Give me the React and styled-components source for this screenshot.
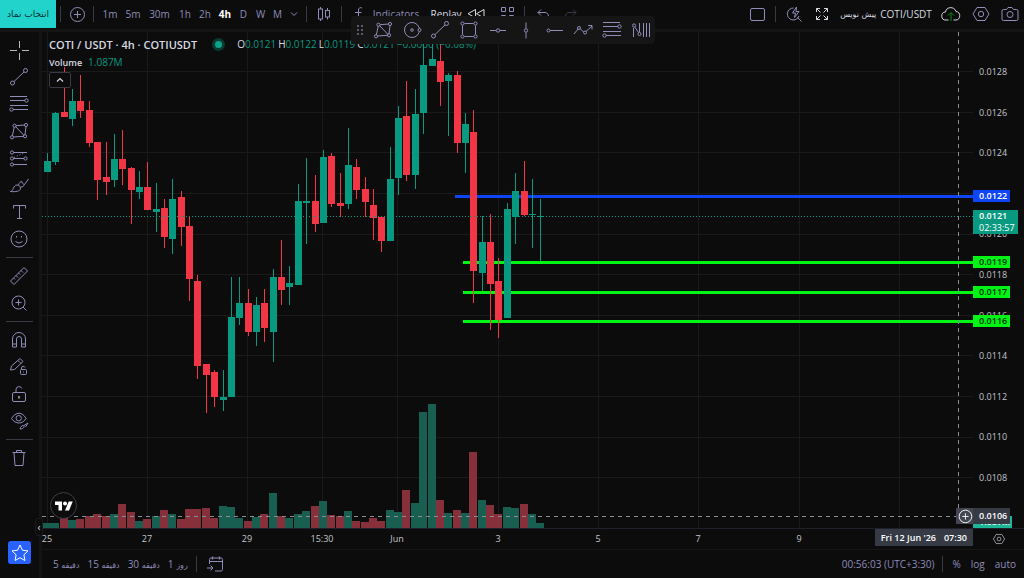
import React from 'react';
import styled, { createGlobalStyle } from 'styled-components';

const ink = '#8f8dba';
const up = '#089981';
const down = '#f23645';

// body top, body bottom, high, low, up (1) or down (0)
const candles = [
  [161, 172, 153, 172, 1], [113, 162, 112, 165, 1], [112, 117, 67, 117, 0], [101, 119, 89, 126, 1],
  [101, 111, 75, 118, 0], [110, 143, 101, 147, 0], [142, 180, 142, 200, 0], [177, 182, 142, 195, 0],
  [159, 180, 134, 187, 1], [159, 169, 130, 185, 0], [168, 190, 167, 224, 0], [187, 192, 171, 199, 1],
  [187, 210, 162, 210, 0], [209, 212, 183, 232, 1], [208, 237, 199, 248, 0], [199, 239, 179, 254, 1],
  [197, 227, 191, 246, 0], [226, 279, 216, 301, 0], [281, 366, 275, 379, 0], [364, 375, 364, 413, 0],
  [372, 397, 370, 407, 0], [397, 400, 370, 411, 1], [317, 397, 277, 397, 1], [303, 318, 277, 325, 1],
  [303, 332, 289, 336, 0], [305, 332, 297, 346, 1], [303, 328, 289, 342, 0], [277, 332, 269, 362, 1],
  [277, 290, 240, 305, 0], [283, 287, 266, 305, 1], [201, 285, 184, 285, 1], [201, 203, 158, 244, 1],
  [201, 224, 175, 232, 0], [157, 223, 150, 223, 1], [156, 204, 153, 207, 0], [203, 206, 173, 217, 0],
  [165, 204, 128, 209, 1], [167, 190, 159, 199, 0], [189, 202, 177, 217, 0], [205, 218, 189, 240, 0],
  [217, 241, 217, 252, 0], [179, 241, 147, 241, 1], [118, 178, 106, 195, 1], [116, 175, 81, 181, 0],
  [114, 175, 89, 189, 1], [65, 113, 40, 134, 1], [59, 66, 40, 66, 1], [61, 82, 42, 106, 0],
  [75, 81, 73, 136, 1], [75, 143, 71, 153, 0], [124, 143, 113, 173, 1], [132, 271, 110, 303, 0],
  [242, 273, 216, 291, 1], [242, 284, 214, 330, 0], [281, 320, 258, 338, 0], [209, 318, 203, 318, 1],
  [191, 217, 173, 244, 1], [191, 215, 161, 216, 0], [214, 215, 179, 248, 1], [216, 217, 199, 261, 1],
];

const volumes = [
  5, 5, 10, 8, 9, 12, 14, 12, 14, 24, 16, 7, 9, 12, 18, 14, 9, 19, 19, 20, 10, 22, 21, 10, 7, 11, 14, 35, 12,
  10, 14, 17, 22, 27, 13, 12, 17, 7, 6, 10, 7, 18, 16, 38, 25, 116, 124, 28, 15, 18, 15, 76, 28, 23, 14, 21,
  20, 24, 14, 5,
];

// the 0.0122 step is taken by the alert line's own tag
const prices = [
  '0.0128', '0.0126', '0.0124', '\u00a0', '0.0120', '0.0118', '0.0116', '0.0114', '0.0112', '0.0110', '0.0108',
];

const ticks = [
  [47, '25'], [147, '27'], [247, '29'], [322, '15:30'], [397, 'Jun'], [498, '3'], [598, '5'], [698, '7'],
  [799, '9'], [899, ''],
];

const levels = [
  [455, 196, '#0f45f5'], [463, 262, '#00f514'], [463, 292, '#00f514'], [463, 321, '#00f514'],
];

const LEFT = 42;
const TOP = 32;
const BASE = 496;

const candleX = (i) => Math.round(47 - LEFT + i * 8.36);
const gridY = (i) => Math.round(71 - TOP + i * 40.64) + 0.5;

const glyphs = {
  cross: <path d="M10.500 1v7M10.500 13v7M1 10.500h7M13 10.500h7" />,
  trend: <><circle cx="3.500" cy="16" r="2" /><circle cx="16.500" cy="3.500" r="2" /><path d="M5 14.500 15 5" /></>,
  fib: <><path d="M1 2.500h17M1 6.500h15M1 11.500h18M4 15.500h15" /><circle cx="17.500" cy="6.500" r="1.700" /><circle cx="2.500" cy="15.500" r="1.700" /></>,
  pattern: <><path d="M5.300 6 3.300 15M6.500 5.500 15 14.500M17 5.500l-1 8M7 4.700 15.500 4M4.500 16l10-.700" /><circle cx="5.500" cy="4.700" r="1.600" /><circle cx="17" cy="4" r="1.600" /><circle cx="16" cy="15.200" r="1.600" /><circle cx="3" cy="16.300" r="1.600" /></>,
  forecast: <><path d="M4.500 4.500H18M4.500 10.500H15M4.500 16.500H18" /><path d="m5 9.500 11-5" strokeDasharray="1 2" /><circle cx="3" cy="4.500" r="1.600" /><circle cx="3" cy="10.500" r="1.600" /><circle cx="3" cy="16.500" r="1.600" /><circle cx="16.500" cy="10.500" r="1.600" /></>,
  brush: <path d="M1.500 16.500c3 0 2.500-6.500 6.500-6.500 2 0 3.500 1.500 3.500 3.200 0 3.300-5 3.800-10 3.300zM9.500 10c.5-2 2-3.500 3.500-3.500M12 12c1.500 0 3-1 3.500-2.500M13 6.500c.2 1.700 1 2.700 2.500 3L19.500 4" />,
  text: <path d="M4.500 6.500V3.500h12v3M10.500 3.500v13M8 16.500h5" />,
  smile: <><circle cx="10" cy="10" r="8" /><path d="M6.500 12c1.500 2.500 5.500 2.500 7 0M7.500 7v1.500M12.500 7v1.500" /></>,
  ruler: <path d="M1.500 15 15 1.500 18.500 5 5 18.500zM4.500 12l1.500 1.500M7 9.500l2 2M9.500 7 11 8.500M12 4.500l2 2" />,
  zoom: <><circle cx="9.500" cy="9.500" r="6.500" /><path d="m14 14 3.500 3.500M6.500 9.500h6M9.500 6.500v6" /></>,
  magnet: <path d="M3.500 17V9a6.500 6.500 0 0 1 13 0v8h-4V9a2.500 2.500 0 0 0-5 0v8zM3.500 14h4M12.500 14h4" />,
  pencilLock: <><path d="m1.500 13 1-4 8.500-7.500 3 3L5.500 12.500zM9 3.500l3 3" /><rect x="11.500" y="12.500" width="6" height="5" rx="1" /><path d="M12.500 12.500V11a1.800 1.800 0 0 1 3.500-.5M14.500 14.500v1" /></>,
  lock: <><rect x="3.500" y="8.500" width="13" height="9" rx="1.500" /><path d="M7 8.500V5.500a3 3 0 0 1 5.800-1" /><path d="M10 12v2.500" stroke="#fff" /></>,
  eye: <><path d="M2.500 7.500C6.500.5 13.500.5 17 7.500c-3.500 6-10.500 6-14.500 0z" /><circle cx="9.700" cy="7.200" r="2.700" /><path d="M11 18c.5-2 1.500-3.500 3.500-3.500 1 1 .5 3.500-3.500 3.500zM15 14.500l4-2.500-2.500 4" /></>,
  trash: <path d="M3.500 4.500h13M5 4.500l1 13h8l1-13M7.500 4.500V2.500h5v2" />,
  star: <path d="m10 2 2.400 5.200 5.600.700-4.100 3.900 1 5.700L10 14.700 5.100 17.500l1-5.700L2 7.900l5.600-.700z" />,
  plus: <><circle cx="10.500" cy="10.500" r="7" /><path d="M10.500 7v7M7 10.500h7" /></>,
  chevron: <path d="m7 8.500 3 3 3-3" />,
  bars: <><path d="M6.500 3v2M6.500 15v2M13.500 4v2.500M13.500 13v2.500" /><rect x="4.500" y="5" width="4" height="10" /><rect x="11.500" y="6.500" width="4" height="6.500" /></>,
  fx: <path d="M13 4c-2-1-3.500 0-3.500 2v8c0 2-1 3-2.500 2.500M6 8.500h6.500" />,
  rewind: <path d="M9.500 5.500v8.500L2 9.700zM18 5.500v8.500l-7.500-4.300z" />,
  grid: <path d="M4.500 3.500h4v4h-4zM12.500 3.500h4v4h-4zM4.500 11.500h4v4h-4zM12.500 11.500h4v4h-4z" />,
  undo: <path d="M8 5.500 5 8.500l3 3M5 8.500h7c2 0 3.500 1.500 3.500 4" />,
  redo: <path d="m12 5.500 3 3-3 3M15 8.500H8c-2 0-3.500 1.500-3.500 4" />,
  square: <rect x="2.500" y="4.500" width="14" height="12" rx="1.500" />,
  quick: <><path d="M9.500 4A6 6 0 1 0 15 12M13.500 13.500l4 4M12.500 3 8.500 9h3l-1 4.500L15 7.500h-3z" /></>,
  full: <path d="M4.500 8V4.500H8M4.500 4.500l4 4M12 4.500h3.500V8M15.500 4.500l-4 4M4.500 12v3.500H8M4.500 15.500l4-4M15.500 12v3.500H12M15.500 15.500l-4-4" />,
  hexagon: <><path d="M6 3.500h8L18 10l-4 6.500H6L2 10z" /><circle cx="10" cy="10" r="2.700" /></>,
  camera: <><path d="M3.500 5.500h3L8 3.500h4l1.500 2h3a1.500 1.500 0 0 1 1.500 1.500v8a1.500 1.500 0 0 1-1.500 1.500h-13A1.500 1.500 0 0 1 2 15V7a1.500 1.500 0 0 1 1.500-1.500z" /><circle cx="10" cy="10.500" r="3" /></>,
  cloud: <><path d="M7.500 16H5a4 4 0 0 1-.5-8C5 2.500 13.500 2 15 7.500c5 0 5 8.500 0 8.500h-2.500" stroke="#d1d4dc" /><path d="M10 17V9M7 11.500l3-3 3 3" stroke="#0a8a0a" /></>,
  calendar: <path d="M4.500 10V5.500A1.500 1.500 0 0 1 6 4h10A1.500 1.500 0 0 1 17.500 5.500v10a1.500 1.500 0 0 1-1.500 1.500H10M4.500 7.500h13M7.500 2.500v3M14.500 2.500v3M2 14h6M5.500 11.500 8 14l-2.500 2.500" />,
  ellipse: <><circle cx="10" cy="10" r="7.500" /><circle cx="10" cy="10" r="1.300" /><circle cx="17.500" cy="10" r="1.500" fill="#151515" /></>,
  rect: <><path d="M5.500 3.500h9M5.500 16.500h9M3.500 5.500v9M16.500 5.500v9" /><circle cx="3.500" cy="3.500" r="1.600" /><circle cx="16.500" cy="3.500" r="1.600" /><circle cx="3.500" cy="16.500" r="1.600" /><circle cx="16.500" cy="16.500" r="1.600" /></>,
  hline: <><path d="M2 10.500h6M12 10.500h6" /><circle cx="10" cy="10.500" r="1.700" /></>,
  vline: <><path d="M10 2.500v6M10 12.500v6" /><circle cx="10" cy="10.500" r="1.700" /></>,
  hray: <><path d="M5 10.500h13" /><circle cx="3.500" cy="10.500" r="1.500" /></>,
  path: <><path d="m1 14 4-5M7.500 9l3 3M13 11.500 19 6M15 5.500h4v4" /><circle cx="6" cy="8" r="1.500" /><circle cx="12" cy="12.500" r="1.500" /></>,
  channel: <><path d="M2.500 8v9M8.500 3v9M12.500 3v14M15.500 3v14M18.500 3v14M3.700 7l4 5.700" /><circle cx="3" cy="5.500" r="1.600" /><circle cx="8.500" cy="14" r="1.600" /></>,
};

const railGroups = [
  [['cross', 'Cross'], ['trend', 'Trend line'], ['fib', 'Fib retracement'], ['pattern', 'Pattern'],
    ['forecast', 'Forecast'], ['brush', 'Brush'], ['text', 'Text'], ['smile', 'Emoji']],
  [['ruler', 'Measure'], ['zoom', 'Zoom in']],
  [['magnet', 'Magnet mode'], ['pencilLock', 'Stay in drawing mode'], ['lock', 'Lock drawings'], ['eye', 'Hide drawings']],
  [['trash', 'Remove drawings']],
];

const frames = [
  ['1m', 24], ['5m', 22], ['30m', 31], ['1h', 20], ['2h', 20], ['4h', 20], ['D', 17], ['W', 17], ['M', 17],
];

const ranges = [['5', 'دقیقه'], ['15', 'دقیقه'], ['30', 'دقیقه'], ['1', 'روز']];

const favorites = ['pattern', 'ellipse', 'trend', 'rect', 'hline', 'vline', 'hray', 'path', 'fib', 'channel'];

function Glyph({ name, size = 20 }) {
  return (
    <Svg width={size} height={size} viewBox="0 0 20 20" aria-hidden="true">
      {glyphs[name]}
    </Svg>
  );
}

function TopBar() {
  return (
    <Header>
      <SymbolButton dir="rtl">انتخاب نماد</SymbolButton>
      <Divider />
      <BarButton $w={24} aria-label="Compare"><Glyph name="plus" /></BarButton>
      <Divider />
      {frames.map(([label, w]) => (
        <BarButton key={label} $w={w} $active={label === '4h'}>{label}</BarButton>
      ))}
      <BarButton $w={16} aria-label="More intervals"><Glyph name="chevron" /></BarButton>
      <Divider />
      <BarButton $w={26} aria-label="Chart type"><Glyph name="bars" /></BarButton>
      <Divider />
      <BarButton $w={76}><Glyph name="fx" />Indicators</BarButton>
      <BarButton $w={72} $bright>Replay<Glyph name="rewind" /></BarButton>
      <BarButton $w={26} aria-label="Layouts"><Glyph name="grid" /></BarButton>
      <Divider />
      <BarButton $w={28} aria-label="Undo"><Glyph name="undo" /></BarButton>
      <BarButton $w={28} $dim aria-label="Redo"><Glyph name="redo" /></BarButton>
      <Spacer />
      <BarButton $w={26} aria-label="Layout"><Glyph name="square" /></BarButton>
      <Divider />
      <BarButton $w={28} aria-label="Quick search"><Glyph name="quick" /></BarButton>
      <BarButton $w={28} $bright aria-label="Fullscreen"><Glyph name="full" /></BarButton>
      <BarButton $w={100} $bright dir="rtl"><span>COTI/USDT</span><Farsi>پیش نویس</Farsi></BarButton>
      <BarButton $w={30} aria-label="Save"><Glyph name="cloud" /></BarButton>
      <BarButton $w={30} aria-label="Settings"><Glyph name="hexagon" /></BarButton>
      <BarButton $w={28} aria-label="Snapshot"><Glyph name="camera" /></BarButton>
    </Header>
  );
}

function Chart() {
  return (
    <Canvas>
      {prices.map((p, i) => (
        <line key={i} x1="0" x2="100%" y1={gridY(i)} y2={gridY(i)} stroke="#1a1a1a" />
      ))}
      {ticks.map(([x]) => (
        <line key={x} x1={x - LEFT + 0.5} x2={x - LEFT + 0.5} y1="0" y2="100%" stroke="#1a1a1a" />
      ))}
      {volumes.map((v, i) => (
        <rect key={i} x={candleX(i) - 4} y={BASE - v} width="8" height={v} fill={candles[i][4] ? '#185f52' : '#85303a'} />
      ))}
      {levels.map(([x, y, color]) => (
        <line key={y} x1={x - LEFT} x2="100%" y1={y - TOP} y2={y - TOP} stroke={color} strokeWidth="3" />
      ))}
      {candles.map(([top, bottom, high, low, isUp], i) => (
        <g key={i} fill={isUp ? up : down}>
          <rect x={candleX(i)} y={high - TOP} width="1" height={low - high} />
          <rect x={candleX(i) - 3} y={top - TOP} width="7" height={bottom - top} />
        </g>
      ))}
      <line x1="0" x2="100%" y1="184.5" y2="184.5" stroke={up} strokeDasharray="1 2" />
      <line x1="0" x2="100%" y1="484" y2="484" stroke="#8b8d94" strokeDasharray="4 4" />
      <line x1="916" x2="916" y1="0" y2="100%" stroke="#8b8d94" strokeDasharray="4 4" />
    </Canvas>
  );
}

function PriceScale() {
  return (
    <PriceAxis>
      {prices.map((p, i) => <span key={i}>{p}</span>)}
      <Tag $y={158} $bg="#0f45f5">0.0122</Tag>
      <Tag $y={178} $bg={up} $w={45}>0.0121<small>02:33:57</small></Tag>
      <Tag $y={224} $bg="#00f514" $ink="#062b06">0.0119</Tag>
      <Tag $y={254} $bg="#00f514" $ink="#062b06">0.0117</Tag>
      <Tag $y={283} $bg="#00f514" $ink="#062b06">0.0116</Tag>
      <Tag $y={484} $bg="#1cb595" $w={39}>1.087M</Tag>
      <Tag $y={476} $bg="#363a45" $tall>0.0106</Tag>
    </PriceAxis>
  );
}

export default function App() {
  return (
    <Page>
      <GlobalStyle />
      <TopBar />
      <Body>
        <Rail>
          {railGroups.map((group, i) => (
            <RailGroup key={i}>
              {group.map(([name, label]) => (
                <RailButton key={name} $bright={name === 'cross'} aria-label={label}><Glyph name={name} /></RailButton>
              ))}
            </RailGroup>
          ))}
          <StarButton aria-label="Favorite tools"><Glyph name="star" /></StarButton>
          <Handle aria-label="Collapse toolbar">‹</Handle>
        </Rail>
        <Main>
          <PlotRow>
            <Plot>
              <Chart />
              <Legend>
                <LegendRow>
                  <Title>COTI / USDT · 4h · COTIUSDT</Title>
                  <Status />
                  <Values>
                    <span>O<b>0.0121</b></span>
                    <span>H<b>0.0122</b></span>
                    <span>L<b>0.0119</b></span>
                    <span>C<b>0.0121</b></span>
                    <b>−0.0000 (−0.08%)</b>
                  </Values>
                </LegendRow>
                <VolumeRow>Volume <b>1.087M</b></VolumeRow>
                <Fold aria-label="Hide indicator legend">
                  <svg width="8" height="6" viewBox="0 0 8 6" aria-hidden="true"><path d="m1 4.500 3-3 3 3" fill="none" stroke="#d1d4dc" strokeWidth="1.200" /></svg>
                </Fold>
              </Legend>
              <Logo href="#tradingview" aria-label="TradingView">
                <svg width="18" height="14" viewBox="0 0 36 28" fill="#fff" aria-hidden="true">
                  <path d="M14 23H7V12H0V5h14v18zM28 23h-8l7.500-18h8L28 23z" />
                  <circle cx="20" cy="9" r="4" />
                </svg>
              </Logo>
              <AddAlert aria-label="Add at price"><Glyph name="plus" size={18} /></AddAlert>
            </Plot>
            <PriceScale />
          </PlotRow>
          <TimeRow>
            <TimeAxis>
              {ticks.map(([x, label]) => (
                <text key={x} x={x - LEFT} y="13" textAnchor="middle">{label}</text>
              ))}
            </TimeAxis>
            <DateTag><span>Fri 12 Jun '26</span><span>07:30</span></DateTag>
            <AxisSettings aria-label="Axis settings"><Glyph name="hexagon" size={14} /></AxisSettings>
          </TimeRow>
          <Footer>
            {ranges.map(([count, unit]) => (
              <FooterButton key={count}>{count} <Farsi>{unit}</Farsi></FooterButton>
            ))}
            <Divider />
            <BarButton $w={28} aria-label="Go to date"><Glyph name="calendar" /></BarButton>
            <Spacer />
            <FooterButton $pad={4}>00:56:03 (UTC+3:30)</FooterButton>
            <Divider />
            <FooterButton $pad={5}>%</FooterButton>
            <FooterButton $pad={5}>log</FooterButton>
            <FooterButton $pad={5}>auto</FooterButton>
          </Footer>
        </Main>
      </Body>
      <Floating role="toolbar" aria-label="Favorite drawing tools">
        <Grip />
        {favorites.map((name) => (
          <FloatButton key={name} aria-label={name}><Glyph name={name} /></FloatButton>
        ))}
      </Floating>
    </Page>
  );
}

const GlobalStyle = createGlobalStyle`
  * {
    box-sizing: border-box;
  }

  body {
    margin: 0;
    background: #141414;
    color: #d8dae0;
    font-family: "Open Sans", "Noto Sans", "DejaVu Sans", sans-serif;
    font-size: 10px;
    font-weight: 500;
  }

  button {
    border: 0;
    padding: 0;
    background: none;
    color: inherit;
    font: inherit;
    cursor: pointer;
  }
`;

const Svg = styled.svg`
  flex: none;
  fill: none;
  stroke: currentColor;
  stroke-width: 1;
`;

const Farsi = styled.span`
  font-family: "DejaVu Sans", sans-serif;
  font-size: 8px;
`;

const Page = styled.div`
  display: flex;
  flex-direction: column;
  gap: 3px;
  height: 100vh;
  overflow: hidden;
`;

const Header = styled.header`
  display: flex;
  align-items: center;
  flex: none;
  height: 29px;
  padding-bottom: 1px;
  background: #0c0c0c;
`;

const SymbolButton = styled.button`
  flex: none;
  width: 56px;
  height: 28px;
  background: #22d3cb;
  color: #06302e;
  font-family: "DejaVu Sans", sans-serif;
  font-size: 9px;
  font-weight: 400;
  white-space: nowrap;
`;

const Divider = styled.i`
  flex: none;
  width: 1px;
  height: 16px;
  margin: 0 4px;
  background: #3a3944;
`;

const Spacer = styled.div`
  flex: 1;
`;

const BarButton = styled.button`
  display: flex;
  align-items: center;
  justify-content: center;
  flex: none;
  gap: 4px;
  width: ${({ $w }) => $w}px;
  height: 28px;
  color: ${({ $active, $bright }) => ($active ? '#fff' : $bright ? '#d8dae0' : ink)};
  font-weight: ${({ $active }) => ($active ? 700 : 500)};
  opacity: ${({ $dim }) => ($dim ? 0.35 : 1)};
  white-space: nowrap;
`;

const Body = styled.div`
  display: flex;
  flex: 1;
  gap: 3px;
  min-height: 0;
`;

const Rail = styled.nav`
  position: relative;
  display: flex;
  flex-direction: column;
  align-items: center;
  flex: none;
  width: 39px;
  padding: 5px 0 14px;
  background: #0c0c0c;
`;

const RailGroup = styled.div`
  width: 27px;

  & + & {
    margin-top: 4px;
    padding-top: 5px;
    border-top: 1px solid #3a3944;
  }
`;

const RailButton = styled.button`
  display: flex;
  align-items: center;
  justify-content: center;
  width: 26px;
  height: 27px;
  padding-bottom: 1px;
  color: ${({ $bright }) => ($bright ? '#b8b8c0' : ink)};
`;

const StarButton = styled.button`
  display: flex;
  align-items: center;
  justify-content: center;
  width: 23px;
  height: 23px;
  margin-top: auto;
  border-radius: 3px;
  background: #2962ff;
  color: #fff;
`;

const Handle = styled.button`
  position: absolute;
  right: -4px;
  bottom: 42px;
  width: 8px;
  height: 18px;
  border-radius: 3px 0 0 3px;
  background: #0c0c0c;
  border: 1px solid #1b1b1b;
  line-height: 14px;
`;

const Main = styled.main`
  display: flex;
  flex-direction: column;
  flex: 1;
  min-width: 0;
  background: #0c0c0c;
`;

const PlotRow = styled.div`
  display: flex;
  flex: 1;
  min-height: 0;
`;

const Plot = styled.div`
  position: relative;
  flex: 1;
  min-width: 0;
  overflow: hidden;
`;

const Canvas = styled.svg`
  display: block;
  width: 100%;
  height: 100%;
  shape-rendering: crispEdges;
`;

const Legend = styled.div`
  position: absolute;
  top: 3px;
  left: 7px;
`;

const LegendRow = styled.div`
  display: flex;
  align-items: center;
  height: 18px;
  white-space: nowrap;
`;

const Title = styled.h1`
  margin: 0 15px 0 0;
  font-size: 11px;
  font-weight: 600;
`;

const Status = styled.i`
  width: 13px;
  height: 13px;
  margin-right: 12px;
  border: 3px solid #0b3a32;
  border-radius: 50%;
  background: #0aa288;
`;

const Values = styled.div`
  display: flex;
  gap: 2px;

  b {
    color: ${up};
    font-weight: 500;
  }
`;

const VolumeRow = styled.div`
  display: flex;
  align-items: center;
  gap: 6px;
  height: 18px;
  font-size: 9px;
  font-weight: 600;

  b {
    color: ${up};
    font-size: 10px;
    font-weight: 500;
  }
`;

const Fold = styled.button`
  display: flex;
  align-items: center;
  justify-content: center;
  width: 22px;
  height: 16px;
  margin-top: 1px;
  border: 1px solid #3a3944;
  border-radius: 2px;
  background: #0c0c0c;
`;

const Logo = styled.a`
  position: absolute;
  left: 8px;
  bottom: 9px;
  display: flex;
  align-items: center;
  justify-content: center;
  width: 27px;
  height: 27px;
  border: 1px solid #3e3e48;
  border-radius: 50%;
  background: #0c0c0c;
`;

const AddAlert = styled.button`
  position: absolute;
  right: 0;
  bottom: 4px;
  display: flex;
  align-items: center;
  justify-content: center;
  width: 17px;
  height: 16px;
  background: #434651;
  color: #fff;
`;

const PriceAxis = styled.aside`
  position: relative;
  display: flex;
  flex-direction: column;
  justify-content: space-between;
  flex: none;
  width: 51px;
  padding: 33px 0 43px 6px;
  color: #c3c6ce;
  font-size: 9px;
  line-height: 14px;
`;

const Tag = styled.div`
  position: absolute;
  top: ${({ $y }) => $y}px;
  left: 0;
  width: ${({ $w = 37 }) => $w}px;
  padding: ${({ $tall }) => ($tall ? 2 : 0)}px 0 ${({ $tall }) => ($tall ? 2 : 0)}px 6px;
  background: ${({ $bg }) => $bg};
  color: ${({ $ink }) => $ink || '#fff'};
  font-weight: 600;
  line-height: 12px;

  small {
    display: block;
    font-size: 9px;
    font-weight: 500;
  }
`;

const TimeRow = styled.div`
  position: relative;
  display: flex;
  flex: none;
  height: 21px;
  border-top: 1px solid #1f2029;
`;

const TimeAxis = styled.svg`
  flex: 1;
  height: 20px;
  fill: #c3c6ce;
  font-size: 9px;
`;

const DateTag = styled.div`
  position: absolute;
  top: 0;
  right: 51px;
  display: flex;
  align-items: center;
  gap: 8px;
  height: 17px;
  padding: 0 6px;
  background: #363a45;
  color: #fff;
  font-size: 9px;
  font-weight: 600;
`;

const AxisSettings = styled.button`
  display: flex;
  align-items: center;
  justify-content: center;
  width: 51px;
  color: #c3c6ce;
`;

const Footer = styled.footer`
  display: flex;
  align-items: center;
  flex: none;
  height: 29px;
  padding: 0 3px 0 7px;
  border-top: 1px solid #161616;
`;

const FooterButton = styled.button`
  padding: 0 ${({ $pad = 4 }) => $pad}px;
  color: ${ink};
  white-space: nowrap;
`;

const Floating = styled.div`
  position: absolute;
  top: 16px;
  left: 351px;
  display: flex;
  align-items: center;
  width: 304px;
  height: 28px;
  padding-left: 5px;
  border-radius: 4px;
  background: #151515;
  color: ${ink};
`;

const Grip = styled.i`
  flex: none;
  width: 9px;
  height: 12px;
  margin-right: 4px;
  background: radial-gradient(circle, #5c5b6b 1px, transparent 1px) 0 0 / 4px 4px;
`;

const FloatButton = styled.button`
  display: flex;
  align-items: center;
  justify-content: center;
  flex: 1;
  height: 28px;
`;
